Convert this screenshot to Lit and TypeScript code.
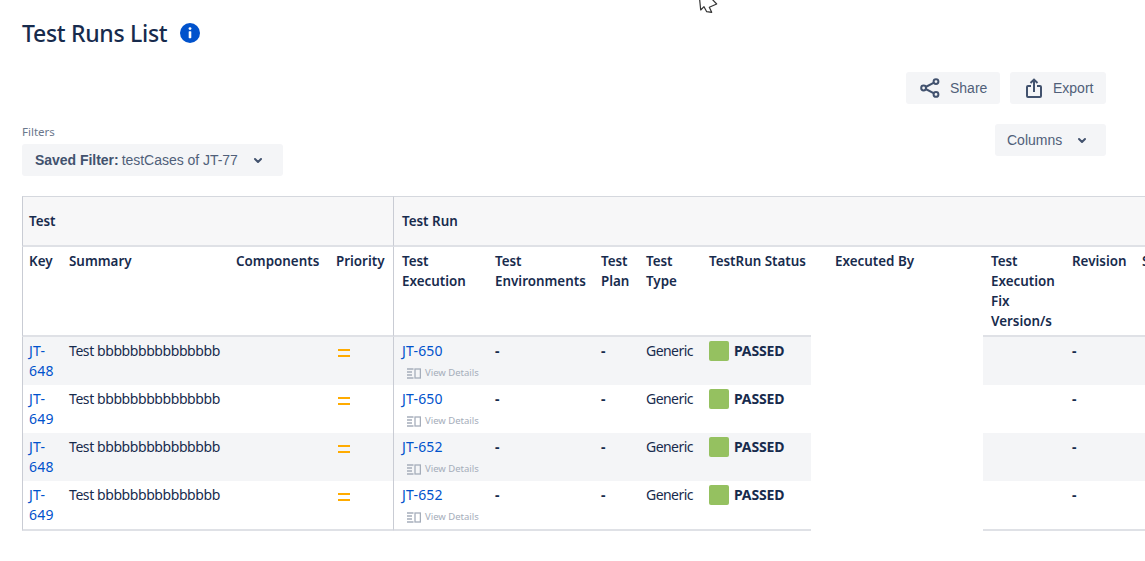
import { LitElement, html, css, svg } from "lit";
import { customElement } from "lit/decorators.js";

const COLS = [41, 167, 100, 64, 95, 106, 45, 63, 108, 172, 83, 70, 100];
const ROWS = [
  ["JT-648", "JT-650"],
  ["JT-649", "JT-650"],
  ["JT-648", "JT-652"],
  ["JT-649", "JT-652"],
];

const chevron = svg`<svg class="chev" width="10" height="7" viewBox="0 0 10 7"><path d="M2 2 5 5l3-3" fill="none" stroke="#42526e" stroke-width="2" stroke-linecap="round" stroke-linejoin="round"/></svg>`;

@customElement("app-root")
export class AppRoot extends LitElement {
  static styles = css`
    :host {
      display: block;
      position: relative;
      width: 1145px;
      height: 561px;
      overflow: hidden;
      background: #fff;
      font-family: "Noto Sans", "Open Sans", sans-serif;
      font-size: 14px;
      line-height: 20px;
      color: #172b4d;
    }
    .title-row { display: flex; align-items: center; gap: 13px; padding: 19px 0 0 22px; height: 28px; }
    h1 { margin: 0; font-size: 23px; font-weight: 500; line-height: 28px; color: #172b4d; letter-spacing: -0.3px; }
    .info { display: block; }
    .btn {
      display: flex; align-items: center; box-sizing: border-box; height: 32px;
      background: #f4f5f7; border-radius: 3px; color: #505f79;
      font-family: "Liberation Sans", Arial, sans-serif; font-size: 14px;
    }
    .actions { display: flex; justify-content: flex-end; gap: 10px; padding: 25px 39px 0 0; }
    .share { width: 94px; padding-left: 14px; gap: 10px; }
    .export { width: 96px; padding-left: 16px; gap: 11px; }
    .filters { display: flex; justify-content: space-between; align-items: flex-start; padding: 20px 39px 0 22px; }
    .flabel { font-size: 11.5px; line-height: 16px; color: #6b778c; margin-bottom: 4px; }
    .filter { width: 261px; padding-left: 13px; color: #505f79; letter-spacing: -0.03px; }
    .filter b { color: #42526e; margin-right: 3px; }
    .filter .chev { margin-left: 15px; }
    .columns { width: 111px; padding-left: 12px; }
    .columns .chev { margin-left: 15px; }
    .wrap { margin: 20px 0 0 22px; overflow: hidden; }
    table { border-collapse: separate; border-spacing: 0; table-layout: fixed; width: 1214px; }
    th, td { box-sizing: border-box; padding: 4px 6px 0; text-align: left; vertical-align: top; }
    th { font-size: 13.4px; font-weight: 600; color: #172b4d; }
    .group th { height: 51px; padding-top: 0; vertical-align: middle; background: #f7f7f8; border-top: 1px solid #d5d8de; border-bottom: 2px solid #dfe1e6; }
    .head th { height: 90px; background: #fff; border-bottom: 2px solid #dfe1e6; }
    td { height: 48px; overflow: hidden; }
    tr.odd td { background: #f4f5f7; }
    tr.last td { height: 50px; border-bottom: 2px solid #dfe1e6; }
    .first { border-left: 1px solid #c9ccd4; }
    .sep { border-right: 1px solid #c9ccd4; }
    th.exec, tr td.exec, tr.odd td.exec, tr.last td.exec { background: #fff; border-bottom: 0; }
    th.exec { padding-left: 24px; }
    .head th.exec { border-bottom: 0; }
    .p8 { padding-left: 8px; }
    a { color: #0052cc; text-decoration: none; letter-spacing: 0.2px; }
    .nowrap { white-space: nowrap; }
    .summary { letter-spacing: -0.42px; }
    .generic { letter-spacing: -0.55px; }
    .prio { display: block; margin-top: 4px; }
    .dash { font-weight: 700; }
    .details { display: flex; align-items: center; gap: 4px; margin: 3px 0 0 5px; height: 18px; font-size: 9.5px; color: #a5adba; white-space: nowrap; }
    .status { display: flex; align-items: center; gap: 5px; font-size: 14px; font-weight: 700; letter-spacing: -0.15px; }
    .swatch { width: 20px; height: 20px; border-radius: 2px; background: #95c160; }
    .cursor { position: absolute; left: 699px; top: 0; overflow: hidden; }
  `;

  private row(r: string[], i: number) {
    const cls = (i % 2 === 0 ? "odd" : "") + (i === ROWS.length - 1 ? " last" : "");
    return html`<tr class=${cls}>
      <td class="first"><a>${r[0]}</a></td>
      <td class="nowrap summary">Test bbbbbbbbbbbbbbb</td>
      <td></td>
      <td class="sep">
        <svg class="prio" width="16" height="16" viewBox="0 0 16 16"><path d="M2 4h12v2H2zM2 10h12v2H2z" fill="#ffab00"/></svg>
      </td>
      <td class="p8">
        <a>${r[1]}</a>
        <div class="details">
          <svg width="14" height="11" viewBox="0 0 14 11" fill="none" stroke="#a5adba" stroke-width="1.3"><path d="M0 1h6.5M0 4h5M0 7h5M0 10h6.5"/><rect x="8" y="1" width="5.4" height="9"/></svg>
          View Details
        </div>
      </td>
      <td class="dash">-</td>
      <td class="dash">-</td>
      <td class="generic">Generic</td>
      <td><div class="status"><span class="swatch"></span>PASSED</div></td>
      <td class="exec"></td>
      <td></td>
      <td class="dash">-</td>
      <td></td>
    </tr>`;
  }

  render() {
    return html`
      <div class="title-row">
        <h1>Test Runs List</h1>
        <svg class="info" width="20" height="20" viewBox="0 0 20 20"><circle cx="10" cy="10" r="10" fill="#0052cc"/><circle cx="10" cy="5.6" r="1.4" fill="#fff"/><rect x="8.7" y="8.2" width="2.6" height="7" rx=".6" fill="#fff"/></svg>
      </div>
      <div class="actions">
        <div class="btn share">
          <svg width="20" height="20" viewBox="0 0 20 20" fill="none" stroke="#42526e" stroke-width="2"><circle cx="3.6" cy="10" r="2.4"/><circle cx="16" cy="3.6" r="2.4"/><circle cx="16" cy="16.4" r="2.4"/><path d="M5.7 9 14 4.7M5.7 11l8.3 4.3"/></svg>
          Share
        </div>
        <div class="btn export">
          <svg width="16" height="20" viewBox="0 0 16 20" fill="none" stroke="#42526e" stroke-width="2"><path d="M5 8H2a1 1 0 0 0-1 1v9a1 1 0 0 0 1 1h12a1 1 0 0 0 1-1V9a1 1 0 0 0-1-1h-3"/><path d="M8 14V2M4.5 5 8 1.6 11.5 5"/></svg>
          Export
        </div>
      </div>
      <div class="filters">
        <div>
          <div class="flabel">Filters</div>
          <div class="btn filter"><b>Saved Filter:</b> testCases of JT-77 ${chevron}</div>
        </div>
        <div class="btn columns">Columns ${chevron}</div>
      </div>
      <div class="wrap">
        <table>
          <colgroup>${COLS.map((w) => html`<col style="width:${w}px" />`)}</colgroup>
          <tr class="group">
            <th class="first sep" colspan="4">Test</th>
            <th class="p8" colspan="9">Test Run</th>
          </tr>
          <tr class="head">
            <th class="first">Key</th>
            <th>Summary</th>
            <th class="nowrap">Components</th>
            <th class="sep">Priority</th>
            <th class="p8">Test Execution</th>
            <th>Test Environments</th>
            <th>Test Plan</th>
            <th>Test Type</th>
            <th class="nowrap">TestRun Status</th>
            <th class="exec">Executed By</th>
            <th class="p8">Test Execution Fix Version/s</th>
            <th>Revision</th>
            <th>Sprint</th>
          </tr>
          ${ROWS.map((r, i) => this.row(r, i))}
        </table>
      </div>
      <svg class="cursor" width="20" height="14" viewBox="0 0 20 14"><path d="M.5-2 1.7 10 5 6.7l2.7 5 5 .6-2.4-5 7.4-3.3L11-3z" fill="#fff" stroke="#333" stroke-width="1.2" stroke-linejoin="round"/></svg>
    `;
  }
}
